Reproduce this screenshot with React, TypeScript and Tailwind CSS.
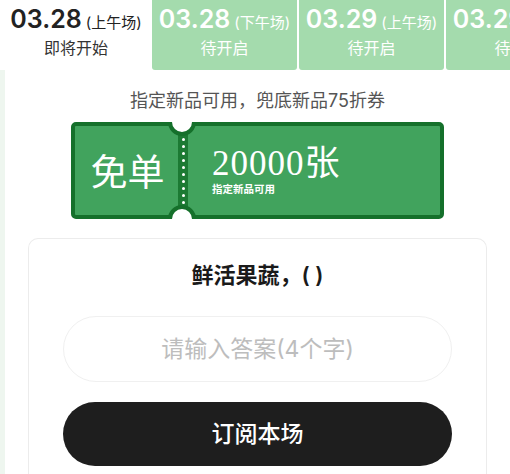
import React from 'react'

const tabs = [
  { date: '03.28', slot: '(上午场)', status: '即将开始', active: true },
  { date: '03.28', slot: '(下午场)', status: '待开启', active: false },
  { date: '03.29', slot: '(上午场)', status: '待开启', active: false },
  { date: '03.29', slot: '(下午场)', status: '待开启', active: false }
]

const cjk = "font-['Inter','Noto_Sans_CJK_SC',sans-serif]"

function Notch({ bottom }: { bottom?: boolean }) {
  return (
    <div
      className={`absolute left-[97px] w-[28px] h-[14px] overflow-hidden ${
        bottom ? 'bottom-0' : 'top-0'
      }`}
    >
      <div
        className={`w-[28px] h-[28px] rounded-full bg-white border-4 border-[#15702b] ${
          bottom ? '' : '-mt-[14px]'
        }`}
      />
    </div>
  )
}

export default function App() {
  return (
    <div className={`w-[510px] h-[474px] overflow-hidden bg-white flex flex-col ${cjk}`}>
      {/* 场次标签 */}
      <div className="flex h-[70px] shrink-0 gap-[2px]">
        {tabs.map((t, i) => (
          <div
            key={i}
            className={`shrink-0 flex flex-col items-center pt-[4px] ${
              i === 0 ? 'w-[152px] bg-white' : 'w-[145px] bg-[#a4dbad] rounded-b-[3px]'
            } ${i === 1 ? '-ml-[2px]' : ''}`}
          >
            <div className={`flex items-baseline whitespace-nowrap ${t.active ? 'text-[#222]' : 'text-white'}`}>
              <span className="text-[25px] font-semibold leading-[30px]">{t.date}</span>
              <span className="text-[15px] ml-[4px]">{t.slot}</span>
            </div>
            <div className={`text-[16px] leading-[22px] mt-[2px] ${t.active ? 'text-[#333]' : 'text-white'}`}>
              {t.status}
            </div>
          </div>
        ))}
      </div>

      {/* 内容 */}
      <div className="flex-1 border-l-[5px] border-[#eef6ef] flex flex-col items-center">
        <p className="mt-[19px] text-[18px] leading-[24px] text-[#555]">指定新品可用，兜底新品75折券</p>

        <div className="relative mt-[9px] w-[373px] h-[97px]">
          <div className="w-full h-full flex border-4 border-[#15702b] rounded-[5px] bg-[#41a35d]">
            <div className="w-[103px] flex items-center justify-center">
              <span className="text-[37px] text-white leading-none ml-[2px] mt-[3px]">免单</span>
            </div>
            <div className="w-[10px] bg-[#1c7a33] flex flex-col items-center justify-center gap-[4px]">
              {Array.from({ length: 10 }).map((_, i) => (
                <span key={i} className="w-[3px] h-[3px] rounded-full bg-white" />
              ))}
            </div>
            <div className="flex-1 flex flex-col justify-center pl-[24px] text-white">
              <span className="font-['Liberation_Serif','Noto_Sans_CJK_SC',serif] text-[35px] leading-[38px] tracking-[1px]">
                20000张
              </span>
              <span className="text-[10.5px] font-bold leading-[12px] mt-[1px]">指定新品可用</span>
            </div>
          </div>
          <Notch />
          <Notch bottom />
        </div>

        {/* 答题卡片 */}
        <div className="mt-[19px] w-[459px] flex-1 border border-[#ececec] border-b-0 rounded-t-[10px] px-[34px] flex flex-col items-center">
          <h2 className="mt-[22px] text-[22px] font-semibold leading-[28px] text-[#1a1a1a]">鲜活果蔬，(&nbsp;)</h2>
          <div className="mt-[27px] w-full h-[66px] rounded-full border border-[#f0f0f0] flex items-center justify-center">
            <span className="text-[23px] text-[#bdbdbd]">请输入答案(4个字)</span>
          </div>
          <button className="mt-[20px] w-full h-[64px] rounded-full bg-[#1e1e1e] text-white text-[23px] font-medium">
            订阅本场
          </button>
        </div>
      </div>
    </div>
  )
}
